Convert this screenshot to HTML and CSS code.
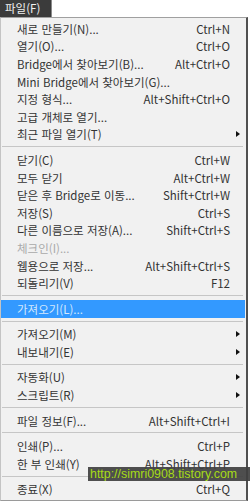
FILE: index.html
```html
<!DOCTYPE html>
<html lang="ko">
<head>
  <meta charset="UTF-8">
  <title>파일 메뉴</title>
  <meta name="viewport" content="width=device-width, initial-scale=1.0">
  <link rel="stylesheet" href="styles.css">
</head>
<body>
  <!-- 메뉴 바 -->
  <div class="menubar">
    <div class="tab">파일(F)</div>
  </div>

  <div class="menu">
    <div class="item"><span class="label">새로 만들기(N)...</span><span class="key">Ctrl+N</span></div>
    <div class="item"><span class="label">열기(O)...</span><span class="key">Ctrl+O</span></div>
    <div class="item"><span class="label">Bridge에서 찾아보기(B)...</span><span class="key">Alt+Ctrl+O</span></div>
    <div class="item"><span class="label">Mini Bridge에서 찾아보기(G)...</span><span class="key"></span></div>
    <div class="item"><span class="label">지정 형식...</span><span class="key">Alt+Shift+Ctrl+O</span></div>
    <div class="item"><span class="label">고급 개체로 열기...</span><span class="key"></span></div>
    <div class="item sub"><span class="label">최근 파일 열기(T)</span><span class="arrow"></span></div>
    <div class="sep"></div>
    <div class="item"><span class="label">닫기(C)</span><span class="key">Ctrl+W</span></div>
    <div class="item"><span class="label">모두 닫기</span><span class="key">Alt+Ctrl+W</span></div>
    <div class="item"><span class="label">닫은 후 Bridge로 이동...</span><span class="key">Shift+Ctrl+W</span></div>
    <div class="item"><span class="label">저장(S)</span><span class="key">Ctrl+S</span></div>
    <div class="item"><span class="label">다른 이름으로 저장(A)...</span><span class="key">Shift+Ctrl+S</span></div>
    <div class="item disabled"><span class="label">체크인(I)...</span><span class="key"></span></div>
    <div class="item"><span class="label">웹용으로 저장...</span><span class="key">Alt+Shift+Ctrl+S</span></div>
    <div class="item"><span class="label">되돌리기(V)</span><span class="key">F12</span></div>
    <div class="sep"></div>
    <div class="item active"><span class="label">가져오기(L)...</span><span class="key"></span></div>
    <div class="sep"></div>
    <div class="item sub"><span class="label">가져오기(M)</span><span class="arrow"></span></div>
    <div class="item sub"><span class="label">내보내기(E)</span><span class="arrow"></span></div>
    <div class="sep"></div>
    <div class="item sub"><span class="label">자동화(U)</span><span class="arrow"></span></div>
    <div class="item sub"><span class="label">스크립트(R)</span><span class="arrow"></span></div>
    <div class="sep"></div>
    <div class="item"><span class="label">파일 정보(F)...</span><span class="key">Alt+Shift+Ctrl+I</span></div>
    <div class="sep"></div>
    <div class="item"><span class="label">인쇄(P)...</span><span class="key">Ctrl+P</span></div>
    <div class="item"><span class="label">한 부 인쇄(Y)</span><span class="key">Alt+Shift+Ctrl+P</span></div>
    <div class="sep"></div>
    <div class="item"><span class="label">종료(X)</span><span class="key">Ctrl+Q</span></div>
  </div>

  <!-- 워터마크 -->
  <div class="watermark">http://simri0908.tistory.com</div>
</body>
</html>
```

FILE: styles.css
```css
body {
  margin: 0;
  background: #ffffff;
  font-family: "Noto Sans CJK KR", "Noto Sans", sans-serif;
  font-size: 11.5px;
  color: #333333;
  width: 250px;
  height: 501px;
  overflow: hidden;
  position: relative;
}

.menubar {
  height: 17px;
  display: flex;
}

.tab {
  width: 52px;
  background: #3b3b3b;
  color: #f2f2f2;
  padding-left: 5px;
  box-sizing: border-box;
  line-height: 17px;
  font-size: 11.5px;
  border-right: 1px solid #8a8a8a;
}

.menu {
  width: 248px;
  height: 484px;
  box-sizing: border-box;
  background: #f1f1f1;
  border-top: 1px solid #a0a0a0;
  border-left: 1px solid #c4c4c4;
  border-right: 2px solid #505050;
  border-bottom: 1px solid #9a9a9a;
  padding-top: 2px;
}

.item {
  height: 17.6px;
  display: flex;
  align-items: center;
  justify-content: space-between;
  padding: 0 15px 0 16px;
  margin-right: 1px;
  white-space: nowrap;
}

.item.sub {
  padding-right: 5px;
}

.item.disabled {
  color: #a9a9a9;
}

.item.active {
  background: #3399ff;
  color: #d4e8fd;
}

.arrow {
  width: 0;
  height: 0;
  border-top: 3.5px solid transparent;
  border-bottom: 3.5px solid transparent;
  border-left: 4px solid #111111;
}

.sep {
  height: 1px;
  background: #c6c6c6;
  margin: 3px 3px 4px 1px;
}

.watermark {
  position: absolute;
  left: 88px;
  right: 0;
  top: 467px;
  height: 14px;
  background: rgba(64, 64, 64, 0.92);
  color: #a6dc16;
  font-family: "Liberation Sans", Arial, sans-serif;
  font-size: 12.4px;
  line-height: 14px;
  padding-left: 2px;
}
```
